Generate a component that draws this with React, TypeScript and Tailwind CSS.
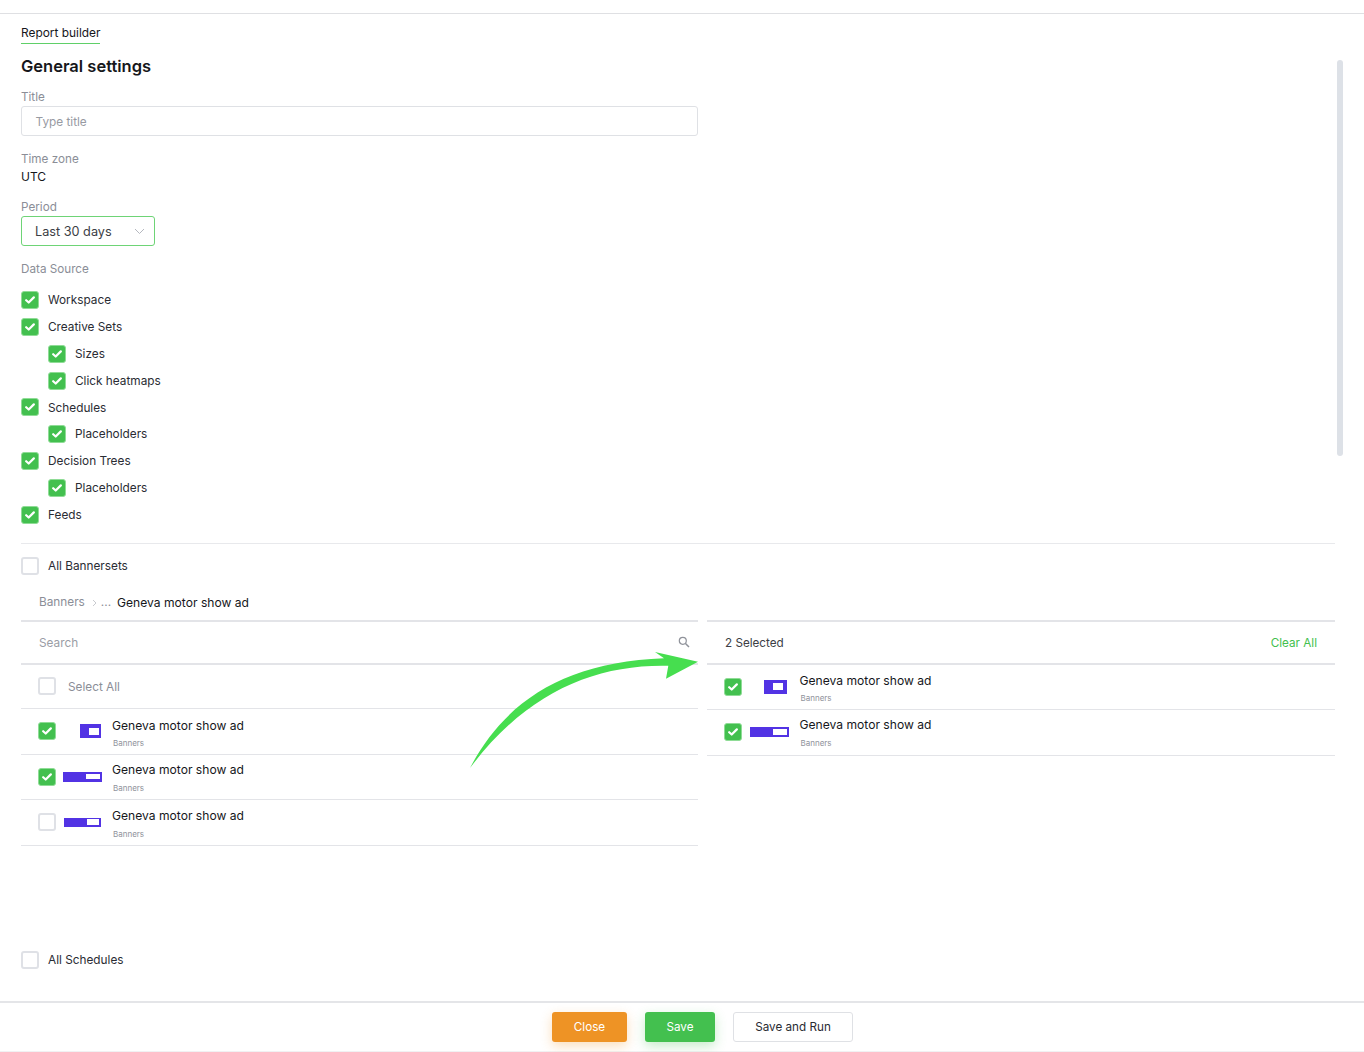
import React from "react";

function Check({ on = true }: { on?: boolean }) {
  if (!on) return <span className="block w-[18px] h-[18px] shrink-0 rounded-[3px] border-2 border-[#dfe1e6] bg-white" />;
  return (
    <span className="flex items-center justify-center w-[18px] h-[18px] shrink-0 rounded-[3px] bg-[#43c04f] border border-[#8fdc96]">
      <svg width="10" height="8" viewBox="0 0 10 8" fill="none">
        <path d="M1.2 4.2 L3.7 6.5 L8.8 1.4" stroke="white" strokeWidth="2.2" strokeLinecap="round" strokeLinejoin="round" />
      </svg>
    </span>
  );
}

function SourceRow({ label, nested = false }: { label: string; nested?: boolean }) {
  return (
    <div className={"flex items-center h-[26.86px] gap-[9px] text-[11.8px] text-[#2a2c33] " + (nested ? "pl-[27px]" : "")}>
      <Check />
      <span className="pt-[2px]">{label}</span>
    </div>
  );
}

function ItemRow({ on, outer, inner, col, text, sub }: { on: boolean; outer: string; inner: string; col: string; text: string; sub: string }) {
  return (
    <div className="flex items-center h-[45.5px] pl-[17px] border-b border-[#e3e4e8]">
      <Check on={on} />
      <div className={"flex justify-end " + col}>
        <span className={"flex items-center justify-end bg-[#5233e4] " + outer}>
          <span className={"block bg-white " + inner} />
        </span>
      </div>
      <div className={"flex flex-col " + text}>
        <span className="text-[12.1px] leading-[16px] text-[#16171b]">Geneva motor show ad</span>
        <span className={"ml-[1px] text-[8px] leading-[10px] text-[#8f929b] " + sub}>Banners</span>
      </div>
    </div>
  );
}

export default function App() {
  return (
    <div className="relative w-[1364px] h-[1052px] overflow-hidden bg-white flex flex-col font-['Inter',sans-serif]">
      <div className="h-[14px] shrink-0 border-b border-[#dfe0e3]" />
      <main className="relative flex-1 px-[21px]">
        <div className="absolute left-[1337px] top-[46px] w-[6px] h-[396px] rounded-full bg-[#dde1e7]" />

        <div className="inline-block mt-[11px] h-[19px] border-b border-[#5fd068] text-[11.9px] leading-[16px] text-[#16171b]">Report builder</div>
        <h1 className="mt-[11px] text-[16.5px] leading-[22px] font-semibold text-[#16171b]">General settings</h1>

        <div className="mt-[13px] text-[11.7px] leading-[14px] text-[#8b8e97]">Title</div>
        <div className="mt-[2px] flex items-center w-[677px] h-[30px] pt-[3px] rounded-[3px] border border-[#dfe1e5] pl-[13.5px] text-[11.8px] text-[#979aa2]">Type title</div>

        <div className="mt-[16px] text-[11.7px] leading-[14px] text-[#8b8e97]">Time zone</div>
        <div className="mt-[3px] text-[12px] leading-[15px] text-[#16171b]">UTC</div>

        <div className="mt-[16px] text-[11.7px] leading-[14px] text-[#8b8e97]">Period</div>
        <div className="mt-[2px] flex items-center justify-between w-[134px] h-[30px] pt-[1px] rounded-[3px] border border-[#6ed476] pl-[13px] pr-[9px] text-[12.7px] text-[#3c3e45]">
          <span>Last 30 days</span>
          <svg width="11" height="7" viewBox="0 0 11 7" fill="none">
            <path d="M1 1 L5.5 5.5 L10 1" stroke="#b5b8bf" strokeWidth="1" />
          </svg>
        </div>

        <div className="mt-[16px] text-[11.7px] leading-[14px] text-[#8b8e97]">Data Source</div>
        <div className="mt-[10.5px]">
          <SourceRow label="Workspace" />
          <SourceRow label="Creative Sets" />
          <SourceRow label="Sizes" nested />
          <SourceRow label="Click heatmaps" nested />
          <SourceRow label="Schedules" />
          <SourceRow label="Placeholders" nested />
          <SourceRow label="Decision Trees" />
          <SourceRow label="Placeholders" nested />
          <SourceRow label="Feeds" />
        </div>

        <div className="mt-[14.5px] w-[1314px] border-t border-[#e8e9ec]" />
        <div className="mt-[13px] flex items-center h-[18px] gap-[9px] text-[11.8px] text-[#2a2c33]">
          <Check on={false} />
          <span className="pt-[3px]">All Bannersets</span>
        </div>

        <div className="mt-[19px] flex items-center h-[18px] pl-[18px] text-[11.8px]">
          <span className="text-[#8b8e97]">Banners</span>
          <svg className="ml-[7px] mr-[4px]" width="5" height="8" viewBox="0 0 5 8" fill="none">
            <path d="M1 1 L4 4 L1 7" stroke="#c9cbd0" strokeWidth="1" />
          </svg>
          <span className="text-[#8b8e97]">...</span>
          <span className="ml-[6px] text-[12.1px] text-[#16171b]">Geneva motor show ad</span>
        </div>

        <div className="mt-[8px] flex gap-[9px] w-[1314px]">
          <div className="w-[677px]">
            <div className="flex items-center justify-between h-[45px] border-t-2 border-b-2 border-[#e3e4e8] pl-[18px] pr-[8px] text-[11.8px] text-[#9a9da5]">
              <span className="pt-[3px]">Search</span>
              <svg width="12" height="12" viewBox="0 0 12 12" fill="none">
                <circle cx="4.8" cy="4.8" r="3.5" stroke="#8f929a" strokeWidth="1.2" />
                <path d="M7.5 7.5 L11 11" stroke="#8f929a" strokeWidth="1.5" />
              </svg>
            </div>
            <div className="flex items-center h-[44.5px] border-b border-[#e3e4e8] pl-[17px] gap-[12px] text-[11.8px] text-[#8b8e97]">
              <Check on={false} />
              <span className="pt-[2px]">Select All</span>
            </div>
            <ItemRow on col="w-[46px]" text="ml-[10px] pt-[3px]" sub="mt-[4px]" outer="w-[21px] h-[14px] mr-[1px] pr-[2px]" inner="w-[10px] h-[7px]" />
            <ItemRow on col="w-[46px]" text="ml-[10px] pt-[2px]" sub="mt-[5px]" outer="w-[39px] h-[10px] pr-[2px]" inner="w-[14px] h-[5px]" />
            <ItemRow on={false} col="w-[46px]" text="ml-[10px] pt-[2px]" sub="mt-[5px]" outer="w-[37px] h-[9px] mr-[1px] pr-[2px]" inner="w-[12px] h-[6px]" />
          </div>
          <div className="flex-1">
            <div className="flex items-center justify-between h-[45px] border-t-2 border-b-2 border-[#e3e4e8] pl-[18px] pr-[18px] pt-[3px] text-[11.7px]">
              <span className="text-[#3c3e45]">2 Selected</span>
              <span className="text-[#43c04f]">Clear All</span>
            </div>
            <ItemRow on col="w-[47px]" text="ml-[10.5px] pt-[3px]" sub="mt-[4px]" outer="w-[23px] h-[14px] mr-[2px] pr-[4px]" inner="w-[10px] h-[7px]" />
            <ItemRow on col="w-[47px]" text="ml-[10.5px]" sub="mt-[5px]" outer="w-[39px] h-[10px] pr-[2px]" inner="w-[14px] h-[6px]" />
          </div>
        </div>

        <svg className="absolute left-[465px] top-[632px]" width="240" height="125" viewBox="0 0 240 125" fill="none">
          <path d="M5 122 C40 55 100 16 199 12.3 L190 6 L233 15.7 L201 32.7 L203.3 19.7 C130 18 62 46 5 122 Z" fill="#46de4f" />
        </svg>

        <div className="mt-[105px] flex items-center h-[18px] gap-[9px] text-[11.8px] text-[#2a2c33]">
          <Check on={false} />
          <span className="pt-[3px]">All Schedules</span>
        </div>
      </main>
      <footer className="h-[51px] shrink-0 border-t-2 border-b border-t-[#e4e5e8] border-b-[#f1f1f3] flex items-start justify-center pt-[9px] pl-[41px] text-[11.7px]">
        <button className="w-[75px] h-[30px] pt-[2px] rounded-[3px] bg-[#ee9325] text-white shadow-[0_4px_12px_rgba(238,147,37,0.3)]">Close</button>
        <button className="ml-[18px] w-[70px] h-[30px] pt-[2px] rounded-[3px] bg-[#43c04f] text-white shadow-[0_4px_12px_rgba(67,192,79,0.3)]">Save</button>
        <button className="ml-[18px] w-[120px] h-[30px] pt-[2px] rounded-[3px] bg-white border border-[#dfe1e5] text-[#2a2c33]">Save and Run</button>
      </footer>
    </div>
  );
}
